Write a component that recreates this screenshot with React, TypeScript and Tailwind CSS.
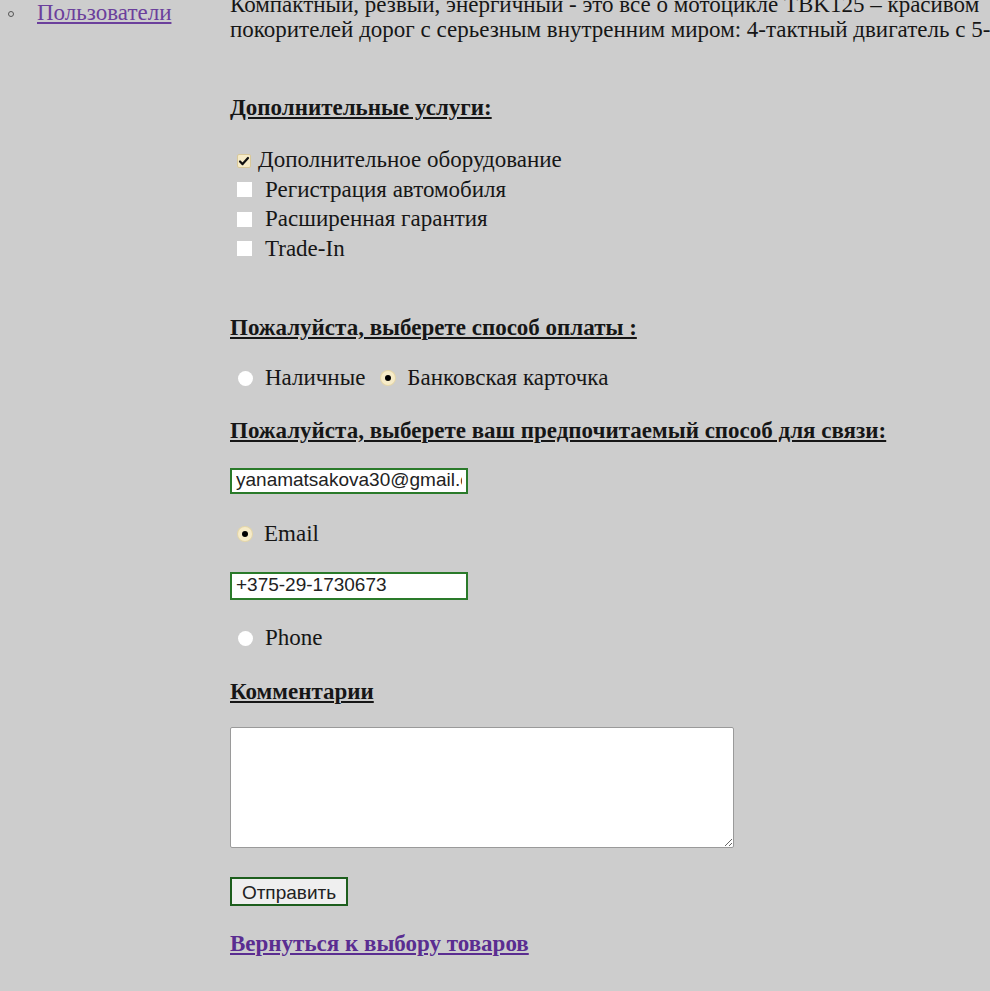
import React from "react";

const serif = "font-['Liberation_Serif','Times_New_Roman',serif]";
const sans = "font-['Liberation_Sans',Arial,sans-serif]";

function Check({ checked }: { checked?: boolean }) {
    return checked ? (
        <span className="flex h-[14px] w-[14px] items-center justify-center rounded-[2px] border border-[#d8c89a] bg-[#f6ebc8]">
            <svg className="h-[12px] w-[12px]" viewBox="0 0 12 12" fill="none" stroke="#111" strokeWidth={2.2}>
                <path d="M2 6.5l2.6 2.6L10 3" strokeLinecap="round" strokeLinejoin="round" />
            </svg>
        </span>
    ) : (
        <span className="block h-[15px] w-[15px] bg-white" />
    );
}

function Radio({ checked }: { checked?: boolean }) {
    return checked ? (
        <span className="flex h-[14px] w-[14px] items-center justify-center rounded-full bg-[#f6ebc8] shadow-[0_0_0_1px_#e4d6a8]">
            <span className="block h-[6px] w-[6px] rounded-full bg-black" />
        </span>
    ) : (
        <span className="block h-[15px] w-[15px] rounded-full bg-white" />
    );
}

export default function App() {
    return (
        <div className={`flex min-h-[991px] w-[990px] overflow-hidden bg-[#cdcdcd] text-[23px] text-[#161616] ${serif}`}>
            <div className="w-[230px] shrink-0">
                <ul className="mt-[1px] flex items-center">
                    <li className="flex h-[25px] items-center">
                        <span className="ml-[8px] block h-[6px] w-[6px] rounded-full border border-[#555]" />
                        <a href="#" className="ml-[23px] text-[#6b3f9c] underline underline-offset-2">Пользователи</a>
                    </li>
                </ul>
            </div>

            <div className="flex min-w-0 flex-1 flex-col">
                <p className="-mt-[8px] whitespace-nowrap leading-[25px]">
                    Компактный, резвый, энергичный - это все о мотоцикле TBK125 – красивом<br />
                    покорителей дорог с серьезным внутренним миром: 4-тактный двигатель с 5-
                </p>

                <h3 className="mt-[53px] h-[25px] font-bold leading-[25px] underline underline-offset-2">Дополнительные услуги:</h3>

                <div className="mt-[26px] flex flex-col">
                    <label className="flex h-[29px] items-center">
                        <span className="ml-[7px]"><Check checked /></span>
                        <span className="ml-[7px]">Дополнительное оборудование</span>
                    </label>
                    {["Регистрация автомобиля", "Расширенная гарантия", "Trade-In"].map((t) => (
                        <label key={t} className="flex h-[29.5px] items-center">
                            <span className="ml-[7px]"><Check /></span>
                            <span className="ml-[13px]">{t}</span>
                        </label>
                    ))}
                </div>

                <h3 className="mt-[51px] h-[25px] font-bold leading-[25px] underline underline-offset-2">Пожалуйста, выберете способ оплаты :</h3>

                <div className="mt-[26px] flex h-[25px] items-center">
                    <span className="ml-[8px]"><Radio /></span>
                    <span className="ml-[12px]">Наличные</span>
                    <span className="ml-[16px]"><Radio checked /></span>
                    <span className="ml-[12px]">Банковская карточка</span>
                </div>

                <h3 className="mt-[27px] h-[25px] font-bold leading-[25px] underline underline-offset-2">Пожалуйста, выберете ваш предпочитаемый способ для связи:</h3>

                <input
                    readOnly
                    value="yanamatsakova30@gmail.com"
                    className={`mt-[25px] h-[26px] w-[238px] border-2 border-[#2a7a2a] bg-white px-[4px] text-[19px] text-[#222] outline-none ${sans}`}
                />

                <div className="mt-[28px] flex h-[25px] items-center">
                    <span className="ml-[8px]"><Radio checked /></span>
                    <span className="ml-[12px]">Email</span>
                </div>

                <input
                    readOnly
                    value="+375-29-1730673"
                    className={`mt-[25px] h-[28px] w-[238px] border-2 border-[#2a7a2a] bg-white px-[4px] text-[19px] text-[#222] outline-none ${sans}`}
                />

                <div className="mt-[26px] flex h-[25px] items-center">
                    <span className="ml-[8px]"><Radio /></span>
                    <span className="ml-[12px]">Phone</span>
                </div>

                <h3 className="mt-[28px] h-[25px] font-bold leading-[25px] underline underline-offset-2">Комментарии</h3>

                <textarea className="mt-[23px] h-[121px] w-[504px] rounded-[2px] border border-[#9a9a9a] bg-white" />

                <button className={`mt-[29px] h-[29px] w-[118px] border-2 border-[#1d5e1d] bg-[#efefef] text-[19px] text-[#222] ${sans}`}>
                    Отправить
                </button>

                <a href="#" className="mt-[25px] h-[25px] font-bold leading-[25px] text-[#5a2d91] underline underline-offset-2">
                    Вернуться к выбору товаров
                </a>
            </div>
        </div>
    );
}
